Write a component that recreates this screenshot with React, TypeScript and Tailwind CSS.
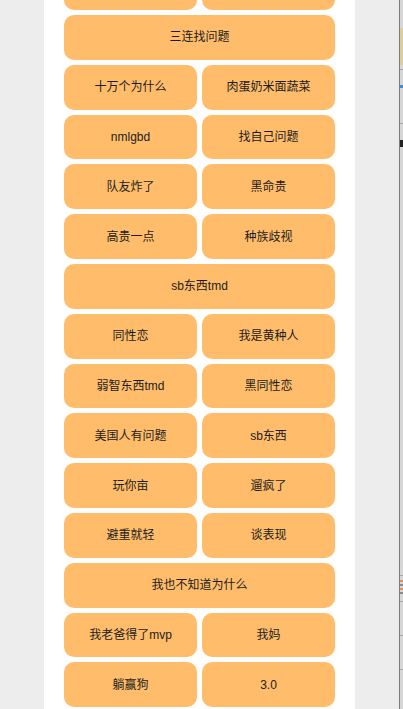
const rows: string[][] = [
  ["", ""],
  ["三连找问题"],
  ["十万个为什么", "肉蛋奶米面蔬菜"],
  ["nmlgbd", "找自己问题"],
  ["队友炸了", "黑命贵"],
  ["高贵一点", "种族歧视"],
  ["sb东西tmd"],
  ["同性恋", "我是黄种人"],
  ["弱智东西tmd", "黑同性恋"],
  ["美国人有问题", "sb东西"],
  ["玩你亩", "遛疯了"],
  ["避重就轻", "谈表现"],
  ["我也不知道为什么"],
  ["我老爸得了mvp", "我妈"],
  ["躺赢狗", "3.0"],
];

export default function App() {
  return (
    <div
      className="flex h-[709px] w-[403px] overflow-hidden bg-[#ededed] text-[#1c1c1c]"
      style={{ fontFamily: '"Liberation Sans", "Noto Sans CJK SC", sans-serif' }}
    >
      {/* page */}
      <div className="flex flex-1 justify-center">
        <div className="w-[311px] bg-white px-5">
          <div className="-mt-[34.8px] grid grid-cols-2 gap-[5px]">
            {rows.map((row, i) =>
              row.map((label, j) => (
                <button
                  key={`${i}-${j}`}
                  className={
                    row.length === 1
                      ? "col-span-2 flex h-[44.8px] items-center justify-center rounded-[10px] bg-[#ffbd6b] text-[12px]"
                      : "flex h-[44.8px] items-center justify-center rounded-[10px] bg-[#ffbd6b] text-[12px]"
                  }
                >
                  {label}
                </button>
              ))
            )}
          </div>
        </div>
      </div>
      {/* edge of the window behind */}
      <div className="w-px bg-[#7b7b7b]" />
      <div className="flex w-[3px] flex-col bg-[#d6d6d6]">
        <div className="h-[28px]" />
        <div className="h-[37px] bg-[#d9cf9e]" />
        <div className="h-[4px]" />
        <div className="h-px bg-[#a8a8a8]" />
        <div className="h-[15px]" />
        <div className="h-[3px] bg-[#3b8fd8]" />
        <div className="h-[35px]" />
        <div className="h-px bg-[#a8a8a8]" />
        <div className="h-[16px]" />
        <div className="h-[7px] bg-[#222222]" />
        <div className="h-[428px]" />
        <div className="h-px bg-[#a8a8a8]" />
        <div className="h-[4px]" />
        <div className="h-[2px] bg-[#e0905a]" />
        <div className="h-[2px]" />
        <div className="h-[2px] bg-[#8a8a8a]" />
        <div className="h-[2px]" />
        <div className="h-[2px] bg-[#e0905a]" />
        <div className="h-[2px]" />
        <div className="h-[2px] bg-[#8a8a8a]" />
        <div className="h-[7px]" />
        <div className="h-px bg-[#a8a8a8]" />
        <div className="h-[33px]" />
        <div className="h-px bg-[#a8a8a8]" />
        <div className="h-[33px]" />
        <div className="h-px bg-[#a8a8a8]" />
      </div>
    </div>
  );
}
